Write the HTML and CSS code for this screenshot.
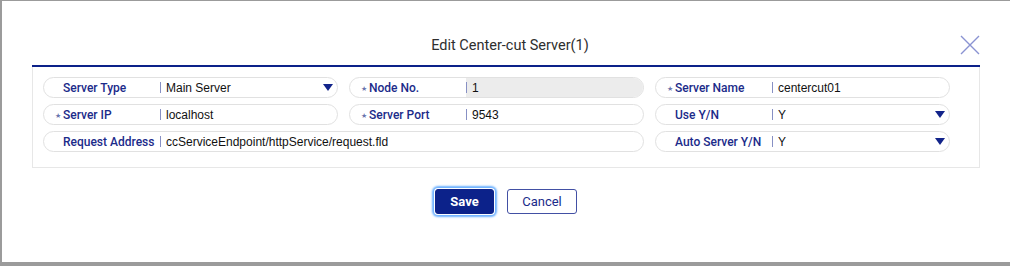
FILE: index.html
```html
<!DOCTYPE html>
<html lang="en">
<head>
  <meta charset="UTF-8">
  <title>Edit Center-cut Server</title>
  <link rel="stylesheet" href="styles.css">
</head>
<body>
  <div class="modal">
    <div class="modal-head">
      <h2 class="modal-title">Edit Center-cut Server(1)</h2>
      <button class="modal-close" type="button" aria-label="Close">
        <svg width="20" height="20" viewBox="0 0 20 20">
          <path d="M1 1 L19 19 M19 1 L1 19" stroke="#8a93d2" stroke-width="1.4" fill="none"/>
        </svg>
      </button>
    </div>

    <div class="form-panel">
      <!-- row 1 -->
      <div class="field">
        <span class="field-label">Server Type</span>
        <span class="field-value">Main Server</span>
        <svg class="caret" width="10" height="7" viewBox="0 0 10 7"><polygon points="0,0 10,0 5,7" fill="#12248a"/></svg>
      </div>
      <div class="field">
        <span class="field-label"><span class="req">★</span>Node No.</span>
        <span class="field-value readonly">1</span>
      </div>
      <div class="field">
        <span class="field-label"><span class="req">★</span>Server Name</span>
        <span class="field-value">centercut01</span>
      </div>

      <!-- row 2 -->
      <div class="field">
        <span class="field-label"><span class="req">★</span>Server IP</span>
        <span class="field-value">localhost</span>
      </div>
      <div class="field">
        <span class="field-label"><span class="req">★</span>Server Port</span>
        <span class="field-value">9543</span>
      </div>
      <div class="field">
        <span class="field-label">Use Y/N</span>
        <span class="field-value">Y</span>
        <svg class="caret" width="10" height="7" viewBox="0 0 10 7"><polygon points="0,0 10,0 5,7" fill="#12248a"/></svg>
      </div>

      <!-- row 3 -->
      <div class="field wide">
        <span class="field-label">Request Address</span>
        <span class="field-value">ccServiceEndpoint/httpService/request.fld</span>
      </div>
      <div class="field">
        <span class="field-label">Auto Server Y/N</span>
        <span class="field-value">Y</span>
        <svg class="caret" width="10" height="7" viewBox="0 0 10 7"><polygon points="0,0 10,0 5,7" fill="#12248a"/></svg>
      </div>
    </div>

    <div class="actions">
      <button class="btn btn-primary" type="button">Save</button>
      <button class="btn btn-outline" type="button">Cancel</button>
    </div>
  </div>
</body>
</html>
```

FILE: styles.css
```css
/* Base */
html, body {
  margin: 0;
  height: 266px;
  overflow: hidden;
}
body {
  background: #9b9b9b;
  font-family: Roboto, "Liberation Sans", Arial, sans-serif;
  color: #222;
  box-sizing: border-box;
}
*, *:before, *:after {
  box-sizing: inherit;
}

/* Modal */
.modal {
  margin: 1px 0 0 2px;
  height: 261px;
  background: #fff;
  padding: 0 30px;
}
.modal-head {
  position: relative;
  height: 66px;
  padding-top: 35px;
  padding-left: 8px;
  border-bottom: 2px solid #0c2189;
  text-align: center;
}
.modal-title {
  margin: 0;
  font-size: 14.5px;
  line-height: 20px;
  font-weight: 400;
  color: #2e2e2e;
}
.modal-close {
  position: absolute;
  top: 34px;
  right: 0;
  width: 20px;
  height: 20px;
  padding: 0;
  border: 0;
  background: none;
  cursor: pointer;
}
.modal-close svg {
  display: block;
}

/* Form panel */
.form-panel {
  border: 1px solid #e7e7e7;
  border-top: 0;
  padding: 10px 29px 15px 10px;
  display: grid;
  grid-template-columns: 295px 295px 295px;
  column-gap: 11px;
  row-gap: 6px;
}
.field {
  height: 21px;
  border: 1px solid #e1e1e1;
  border-radius: 11px;
  display: flex;
  align-items: center;
  overflow: hidden;
}
.field.wide {
  grid-column: span 2;
}
.field-label {
  flex: 0 0 116px;
  padding-left: 19px;
  font-size: 12px;
  font-weight: 500;
  color: #1b2b8a;
  white-space: nowrap;
}
.req {
  display: inline-block;
  width: 8px;
  margin-left: -8px;
  font-family: "DejaVu Sans", sans-serif;
  font-size: 7px;
  vertical-align: 1px;
  color: #6b74ad;
}
.field-value {
  position: relative;
  flex: 1;
  align-self: stretch;
  display: flex;
  align-items: center;
  padding-left: 6px;
  font-family: "Liberation Sans", Arial, sans-serif;
  font-size: 12px;
  color: #111;
  white-space: nowrap;
}
.field-value::before {
  content: "";
  position: absolute;
  left: 0;
  top: 50%;
  height: 11px;
  margin-top: -6px;
  border-left: 1px solid #8790c4;
}
.field-value.readonly {
  background: #ececec;
}
.caret {
  flex: none;
  margin-right: 4px;
}

/* Buttons */
.actions {
  display: flex;
  justify-content: center;
  gap: 13px;
  margin-top: 21px;
}
.btn {
  height: 25px;
  padding: 0;
  border-radius: 3px;
  font-family: Roboto, "Liberation Sans", Arial, sans-serif;
  font-size: 13px;
  cursor: pointer;
}
.btn-primary {
  width: 59px;
  background: #0c228a;
  color: #fff;
  font-weight: 700;
  border: 1px solid #0c228a;
  box-shadow: 0 0 0 1px #fff, 0 0 2px 3px #6db1ff;
}
.btn-outline {
  width: 70px;
  background: #fff;
  color: #1b2b8a;
  border: 1px solid #4250a4;
}
```
